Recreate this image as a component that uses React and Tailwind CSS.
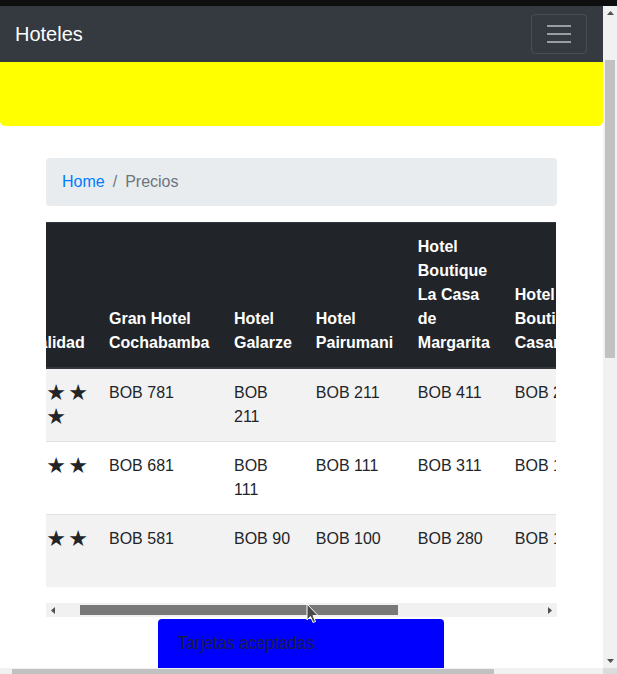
import React from 'react';

const hotels = [
  { name: 'Gran Hotel Cochabamba', prices: ['BOB 781', 'BOB 681', 'BOB 581'], w: 'min-w-[125px]' },
  { name: 'Hotel Galarze', prices: ['BOB 211', 'BOB 111', 'BOB 90'], w: '' },
  { name: 'Hotel Pairumani', prices: ['BOB 211', 'BOB 111', 'BOB 100'], w: 'min-w-[102px]' },
  { name: 'Hotel Boutique La Casa de Margarita', prices: ['BOB 411', 'BOB 311', 'BOB 280'], w: 'min-w-[97px]' },
  { name: 'Hotel Boutique Casareal', prices: ['BOB 261', 'BOB 161', 'BOB 121'], w: '' },
  { name: 'Hostal', prices: ['BOB 75', 'BOB 60', 'BOB 95'], w: '' },
];

const stars = [5, 3, 3];

function Arrow({ dir }) {
  const paths = {
    up: 'M0 4 L3.5 0 L7 4 Z',
    down: 'M0 0 L7 0 L3.5 4 Z',
    left: 'M4 0 L4 7 L0 3.5 Z',
    right: 'M0 0 L4 3.5 L0 7 Z',
  };
  const vertical = dir === 'up' || dir === 'down';
  return (
    <svg width={vertical ? 7 : 4} height={vertical ? 4 : 7} viewBox={vertical ? '0 0 7 4' : '0 0 4 7'}>
      <path d={paths[dir]} fill="#505050" />
    </svg>
  );
}

function PageScrollbar() {
  return (
    <div className="w-[14px] bg-[#f1f1f1] flex flex-col items-center">
      <div className="h-[14px] flex items-center justify-center">
        <Arrow dir="up" />
      </div>
      <div className="h-[40px]" />
      <div className="w-[10px] h-[298px] bg-[#c1c1c1]" />
      <div className="flex-1" />
      <div className="h-[14px] flex items-center justify-center">
        <Arrow dir="down" />
      </div>
    </div>
  );
}

function TableScrollbar() {
  return (
    <div className="h-[14px] bg-[#f1f1f1] flex items-center">
      <div className="w-[14px] flex justify-center">
        <Arrow dir="left" />
      </div>
      <div className="w-[20px]" />
      <div className="w-[318px] h-[10px] bg-[#787878]" />
      <div className="flex-1" />
      <div className="w-[14px] flex justify-center">
        <Arrow dir="right" />
      </div>
    </div>
  );
}

function Stars({ count }) {
  return (
    <div className="w-[58px] flex flex-wrap gap-x-[8px]">
      {Array.from({ length: count }).map((_, i) => (
        <span
          key={i}
          className="w-[14px] flex justify-center font-['DejaVu_Sans',sans-serif] text-[22px] leading-6"
        >
          ★
        </span>
      ))}
    </div>
  );
}

export default function App() {
  return (
    <div className="relative w-[617px] h-[674px] overflow-hidden bg-white flex flex-col font-['Liberation_Sans',Arial,sans-serif] text-[16px] leading-6 text-[#212529]">
      <div className="h-[6px] shrink-0 bg-[#0e0e0e]" />

      <div className="flex flex-1 min-h-0">
        <div className="w-[603px] overflow-hidden">
          <nav className="h-[56px] bg-[#343a40] flex items-center justify-between pl-[15px] pr-4">
            <span className="text-[20px] leading-[30px] text-white">Hoteles</span>
            <div className="w-[56px] h-[40px] border border-white/10 rounded-[4px] flex flex-col items-center justify-center gap-[6px]">
              <div className="w-[24px] h-[2px] bg-white/50" />
              <div className="w-[24px] h-[2px] bg-white/50" />
              <div className="w-[24px] h-[2px] bg-white/50" />
            </div>
          </nav>

          <div className="h-[64px] bg-[#ffff00] rounded-b-[5px]" />

          <div className="px-[46px] pt-[32px]">
            <ol className="flex bg-[#e9ecef] rounded-[4px] px-4 py-3 mb-4">
              <li className="text-[#007bff]">Home</li>
              <li className="text-[#6c757d] px-2">/</li>
              <li className="text-[#6c757d]">Precios</li>
            </ol>

            <div className="w-[510px] overflow-hidden">
              <table className="ml-[-31px] border-collapse mb-4 w-[520px]">
                <thead>
                  <tr>
                    <th className="bg-[#212529] text-white font-bold text-left align-bottom p-3 border-t border-b-2 border-[#32383e]">
                      Calidad
                    </th>
                    {hotels.map((h) => (
                      <th
                        key={h.name}
                        className={
                          'bg-[#212529] text-white font-bold text-left align-bottom p-3 border-t border-b-2 border-[#32383e] ' +
                          h.w
                        }
                      >
                        {h.name}
                      </th>
                    ))}
                  </tr>
                </thead>
                <tbody>
                  {stars.map((s, i) => (
                    <tr key={i} className={i % 2 === 0 ? 'bg-[#f2f2f2]' : 'bg-white'}>
                      <td className="p-3 align-top border-t border-[#dee2e6]">
                        <Stars count={s} />
                      </td>
                      {hotels.map((h) => (
                        <td key={h.name} className="p-3 align-top border-t border-[#dee2e6]">
                          {h.prices[i]}
                        </td>
                      ))}
                    </tr>
                  ))}
                </tbody>
              </table>
            </div>

            <TableScrollbar />
          </div>

          <div className="mt-[2px] ml-[158px] w-[286px] h-[60px] bg-[#0000ff] rounded-t-[4px] px-5 pt-[11px]">
            <span className="inline-block origin-left scale-x-[0.9] whitespace-nowrap text-[18px] leading-[27px] text-[#1c1c4a]">
              Tarjetas aceptadas
            </span>
          </div>
        </div>

        <PageScrollbar />
      </div>

      <div className="h-[6px] shrink-0 flex">
        <div className="w-[603px] bg-[#f1f1f1] pt-[1px] pl-[12px]">
          <div className="w-[482px] h-[5px] bg-[#c1c1c1]" />
        </div>
        <div className="flex-1 bg-[#dcdcdc]" />
      </div>

      <svg
        className="absolute left-[306px] top-[603px]"
        width="13"
        height="21"
        viewBox="0 0 13 21"
      >
        <path
          d="M1 1 L1 17 L4.5 13.5 L7 19.5 L9.5 18.5 L7 12.5 L12 12.5 Z"
          fill="#4a4a4a"
          stroke="#ffffff"
          strokeWidth="1"
          strokeLinejoin="round"
        />
      </svg>
    </div>
  );
}
